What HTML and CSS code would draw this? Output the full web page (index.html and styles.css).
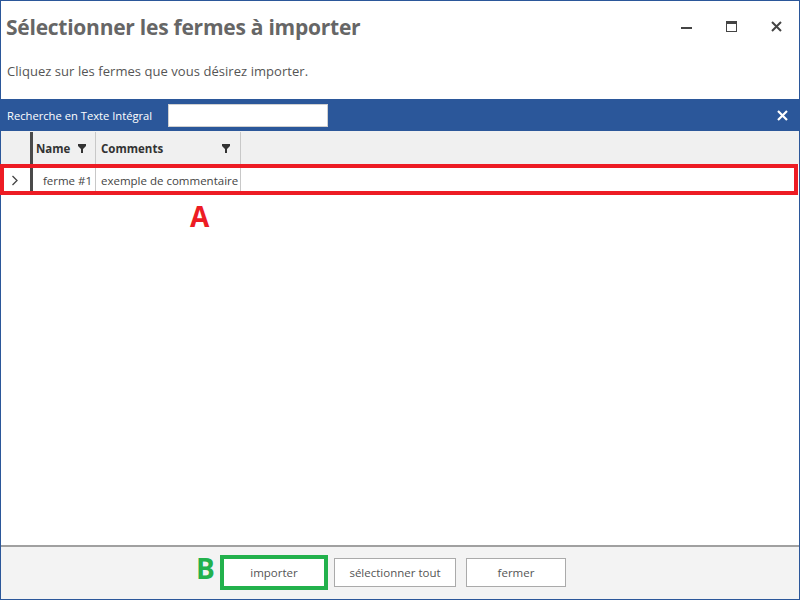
FILE: index.html
```html
<!DOCTYPE html>
<html lang="fr">
<head>
<meta charset="utf-8">
<title>Sélectionner les fermes à importer</title>
<link rel="stylesheet" href="styles.css">
</head>
<body>
<div class="window">
  <div class="titlebar">
    <h1 class="title">Sélectionner les fermes à importer</h1>
    <div class="controls">
      <span class="ctl"><svg width="11" height="11" viewBox="0 0 11 11"><rect x="0" y="6" width="11" height="2" fill="#444"/></svg></span>
      <span class="ctl"><svg width="11" height="11" viewBox="0 0 11 11"><rect x="0.5" y="0.5" width="10" height="10" fill="none" stroke="#444" stroke-width="1"/><rect x="0" y="0" width="11" height="3" fill="#444"/></svg></span>
      <span class="ctl"><svg width="11" height="11" viewBox="0 0 11 11"><path d="M1 1L10 10M10 1L1 10" stroke="#444" stroke-width="2"/></svg></span>
    </div>
  </div>
  <p class="subtitle">Cliquez sur les fermes que vous désirez importer.</p>
  <div class="searchbar">
    <span class="search-label">Recherche en Texte Intégral</span>
    <input class="search-input" type="text">
    <span class="spacer"></span>
    <svg class="search-close" width="11" height="11" viewBox="0 0 11 11"><path d="M1 1L10 10M10 1L1 10" stroke="#fff" stroke-width="2.2"/></svg>
  </div>
  <div class="grid">
    <div class="grid-header">
      <div class="cell indicator"></div>
      <div class="cell col-name"><span>Name</span><svg class="funnel" width="8" height="9" viewBox="0 0 8 9"><path d="M0 0H8V2L5 5V9H3V5L0 2Z" fill="#333"/></svg></div>
      <div class="cell col-comments"><span>Comments</span><svg class="funnel" width="8" height="9" viewBox="0 0 8 9"><path d="M0 0H8V2L5 5V9H3V5L0 2Z" fill="#333"/></svg></div>
      <div class="cell col-fill"></div>
    </div>
    <div class="grid-row">
      <div class="cell indicator"><svg width="8" height="11" viewBox="0 0 8 11"><path d="M1.5 1L6 5.5L1.5 10" fill="none" stroke="#444" stroke-width="1.3"/></svg></div>
      <div class="cell col-name name-value">ferme #1</div>
      <div class="cell col-comments">exemple de commentaire</div>
      <div class="cell col-fill"></div>
      <span class="mark mark-red"></span>
    </div>
    <div class="grid-body">
      <span class="label label-a">A</span>
    </div>
  </div>
  <div class="footer">
    <span class="label label-b">B</span>
    <span class="btn-wrap marked"><button class="btn btn-import">importer</button></span>
    <button class="btn btn-all">sélectionner tout</button>
    <button class="btn btn-close">fermer</button>
  </div>
</div>
</body>
</html>
```

FILE: styles.css
```css
html, body {
  margin: 0;
  padding: 0;
  background: #fff;
}

body {
  font-family: "Open Sans", "Noto Sans", "Liberation Sans", sans-serif;
  color: #555;
}

.window {
  width: 800px;
  height: 600px;
  box-sizing: border-box;
  border: 1px solid #2b579a;
  display: flex;
  flex-direction: column;
  background: #fff;
}

.titlebar {
  height: 46px;
  display: flex;
  align-items: flex-start;
}

.title {
  margin: 0;
  padding: 11px 0 0 5px;
  font-size: 21px;
  line-height: 30px;
  font-weight: 700;
  color: #666;
  flex: 1;
  letter-spacing: -0.25px;
}

.controls {
  display: flex;
}

.ctl {
  width: 45px;
  height: 46px;
  display: flex;
  align-items: center;
  justify-content: center;
  padding-top: 4px;
  box-sizing: border-box;
}

.subtitle {
  margin: 0;
  height: 52px;
  box-sizing: border-box;
  padding: 14px 0 0 6px;
  font-size: 13px;
  line-height: 20px;
  color: #555;
  letter-spacing: 0.05px;
}

.searchbar {
  height: 32px;
  background: #2b579a;
  display: flex;
  align-items: center;
  padding: 0 11px 0 6px;
}

.search-label {
  color: #fff;
  font-size: 11.2px;
  width: 161px;
}

.search-input {
  width: 160px;
  height: 23px;
  box-sizing: border-box;
  border: 1px solid #d0d0d0;
  background: #fff;
  margin: 0;
  padding: 0;
  outline: none;
}

.spacer {
  flex: 1;
}

.grid {
  flex: 1;
  display: flex;
  flex-direction: column;
  min-height: 0;
}

.grid-header,
.grid-row {
  display: flex;
  font-size: 11.5px;
}

.grid-header {
  height: 33px;
  padding-top: 1px;
  box-sizing: border-box;
  background: #f0f0f0;
  font-weight: 700;
  color: #333;
}

.grid-row {
  height: 31px;
  padding-top: 1px;
  box-sizing: border-box;
  position: relative;
  color: #444;
}

.cell {
  box-sizing: border-box;
  display: flex;
  align-items: center;
}

.indicator {
  border-right: 3px solid #4a4a4a;
  justify-content: center;
  padding-right: 2px;
  box-sizing: content-box;
  width: 27px;
}

.col-name {
  width: 63px;
  border-right: 1px solid #c8c8c8;
  padding: 0 9px 0 3px;
  justify-content: space-between;
}

.col-comments {
  width: 145px;
  border-right: 1px solid #c8c8c8;
  padding: 0 10px 0 5px;
  justify-content: space-between;
}

.grid-row .col-comments {
  padding: 0 3px 0 5px;
  white-space: nowrap;
}

.grid-row .name-value {
  justify-content: flex-end;
  padding-right: 3px;
}

.col-fill {
  flex: 1;
}

.mark {
  position: absolute;
  box-sizing: border-box;
}

.mark-red {
  top: 0;
  left: -1px;
  right: 1px;
  height: 31px;
  border: 4px solid #ed1c24;
}

.grid-body {
  flex: 1;
  position: relative;
  background: #fff;
}

.label {
  position: absolute;
  font-family: "Open Sans", "Noto Sans", sans-serif;
  font-weight: 700;
  font-size: 28px;
  line-height: 28px;
}

.label-a {
  color: #ed1c24;
  left: 189px;
  top: 7px;
}

.footer {
  height: 54px;
  box-sizing: border-box;
  border-top: 2px solid #a0a0a0;
  background: #f3f3f3;
  display: flex;
  align-items: flex-start;
  padding: 11px 0 0 223px;
  gap: 10px;
  position: relative;
}

.label-b {
  color: #22b14c;
  left: 195px;
  top: 7px;
}

.btn-wrap.marked {
  display: flex;
  outline: 4px solid #22b14c;
  outline-offset: 0;
  margin: 1px 0 0 0;
}

.btn {
  height: 29px;
  box-sizing: border-box;
  border: 1px solid #aaa;
  background: #fff;
  font-family: inherit;
  font-size: 11.5px;
  color: #555;
  padding: 0;
  margin: 0;
}

.btn-import {
  width: 100px;
  height: 27px;
  border-color: #fff;
}

.btn-all {
  width: 122px;
}

.btn-close {
  width: 100px;
}
```
